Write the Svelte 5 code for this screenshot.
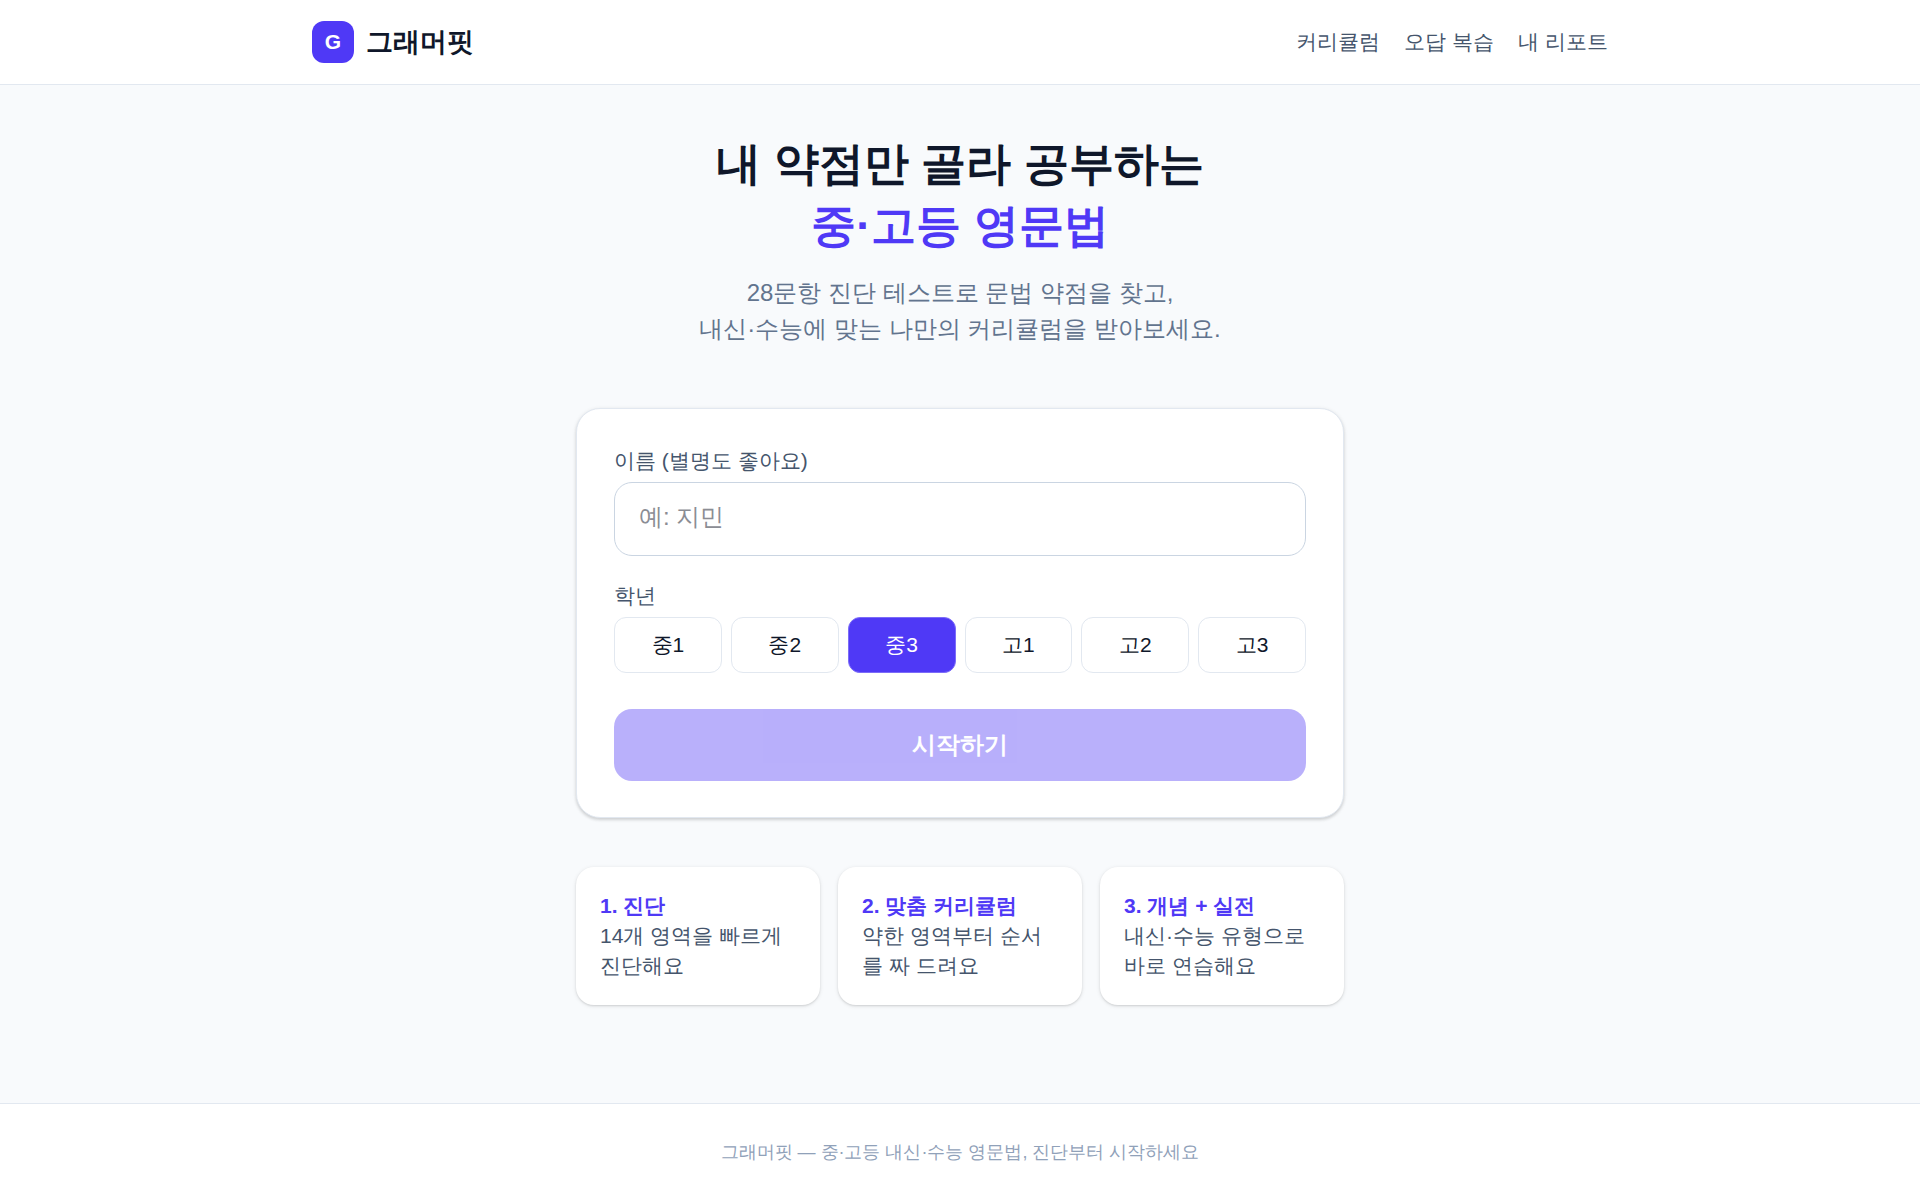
<script lang="ts">
	const links = [
		{ href: '#curriculum', label: '커리큘럼' },
		{ href: '#review', label: '오답 복습' },
		{ href: '#report', label: '내 리포트' }
	];

	const grades = ['중1', '중2', '중3', '고1', '고2', '고3'];

	const steps = [
		{ title: '1. 진단', text: '14개 영역을 빠르게 진단해요' },
		{ title: '2. 맞춤 커리큘럼', text: '약한 영역부터 순서를 짜 드려요' },
		{ title: '3. 개념 + 실전', text: '내신·수능 유형으로 바로 연습해요' }
	];

	let name = $state('');
	let grade = $state('중3');
</script>

<div class="page">
	<header>
		<div class="header-inner">
			<a class="brand" href="#home">
				<span class="logo">G</span>
				<span>그래머핏</span>
			</a>
			<nav>
				{#each links as link}
					<a href={link.href}>{link.label}</a>
				{/each}
			</nav>
		</div>
	</header>

	<main>
		<section class="hero">
			<h1>내 약점만 골라 공부하는<br /><span class="accent">중·고등 영문법</span></h1>
			<p>28문항 진단 테스트로 문법 약점을 찾고,<br />내신·수능에 맞는 나만의 커리큘럼을 받아보세요.</p>
		</section>

		<form class="card" onsubmit={(e) => e.preventDefault()}>
			<label for="name">이름 (별명도 좋아요)</label>
			<input id="name" type="text" placeholder="예: 지민" bind:value={name} />

			<div class="label" id="grade-label">학년</div>
			<div class="grades" role="group" aria-labelledby="grade-label">
				{#each grades as g}
					<button
						type="button"
						class="grade"
						class:selected={grade === g}
						aria-pressed={grade === g}
						onclick={() => (grade = g)}>{g}</button
					>
				{/each}
			</div>

			<button class="submit" type="submit" disabled={!name.trim()}>시작하기</button>
		</form>

		<section class="steps">
			{#each steps as step}
				<div class="step">
					<h2>{step.title}</h2>
					<p>{step.text}</p>
				</div>
			{/each}
		</section>
	</main>

	<footer>그래머핏 — 중·고등 내신·수능 영문법, 진단부터 시작하세요</footer>
</div>

<style>
	:global(body) {
		margin: 0;
		background: #f8fafc;
	}
	.page,
	.page * {
		box-sizing: border-box;
	}
	.page {
		display: flex;
		flex-direction: column;
		min-height: 100vh;
		color: #0f172a;
		font-family: 'Liberation Sans', sans-serif;
		font-size: 24px;
		line-height: 36px;
	}
	h1,
	h2,
	p {
		margin: 0;
	}
	a {
		color: inherit;
		text-decoration: none;
	}
	input,
	button {
		font: inherit;
	}
	header {
		border-bottom: 1px solid #e2e8f0;
		background: #fff;
	}
	.header-inner {
		display: flex;
		align-items: center;
		justify-content: space-between;
		max-width: 1344px;
		margin: 0 auto;
		padding: 21px 24px;
	}
	.brand {
		display: flex;
		align-items: center;
		gap: 12px;
		font-size: 27px;
		font-weight: 700;
		line-height: 42px;
	}
	.logo {
		display: grid;
		place-items: center;
		width: 42px;
		height: 42px;
		border-radius: 12px;
		background: #4f39f6;
		color: #fff;
		font-size: 21px;
	}
	nav {
		display: flex;
		gap: 24px;
		color: #45556c;
		font-size: 21px;
	}
	main {
		flex: 1;
		width: 100%;
		max-width: 816px;
		margin: 0 auto;
		padding: 48px 24px 96px;
	}
	.hero {
		margin-bottom: 61px;
		text-align: center;
	}
	.hero h1 {
		margin-bottom: 18px;
		font-size: 45px;
		font-weight: 700;
		line-height: 62px;
	}
	.accent {
		color: #4f39f6;
	}
	.hero p {
		color: #62748e;
	}
	.card {
		padding: 36px 37px;
		border: 1px solid #e2e8f0;
		border-radius: 24px;
		background: #fff;
		box-shadow: 0 1px 4px rgba(0, 0, 0, 0.1), 0 2px 3px rgba(0, 0, 0, 0.1);
	}
	label,
	.label {
		display: block;
		margin-bottom: 6px;
		color: #45556c;
		font-size: 21px;
		line-height: 31px;
	}
	input {
		display: block;
		width: 100%;
		height: 74px;
		margin-bottom: 24px;
		padding: 16px 24px 20px;
		border: 1px solid #cad5e2;
		border-radius: 18px;
		outline: none;
		background: #fff;
		color: inherit;
	}
	input::placeholder {
		color: #8b8d94;
	}
	input:focus {
		border-color: #4f39f6;
	}
	.grades {
		display: grid;
		grid-template-columns: repeat(6, 1fr);
		gap: 9px;
		margin-bottom: 36px;
	}
	.grade {
		height: 56px;
		padding: 0;
		border: 1px solid #e2e8f0;
		border-radius: 12px;
		background: #fff;
		color: inherit;
		font-size: 21px;
		cursor: pointer;
	}
	.grade.selected {
		border-color: #7c6cf8;
		background: #4f39f6;
		color: #fff;
	}
	.submit {
		display: block;
		width: 100%;
		padding: 18px;
		border: 0;
		border-radius: 18px;
		background: #4f39f6;
		color: #fff;
		font-weight: 700;
		cursor: pointer;
	}
	.submit:disabled {
		opacity: 0.4;
		cursor: default;
	}
	.steps {
		display: grid;
		grid-template-columns: repeat(3, 1fr);
		gap: 18px;
		margin-top: 49px;
	}
	.step {
		padding: 24px;
		border-radius: 18px;
		background: #fff;
		box-shadow: 0 1px 4px rgba(0, 0, 0, 0.1), 0 1px 2px rgba(0, 0, 0, 0.1);
		color: #45556c;
		font-size: 21px;
		line-height: 30px;
	}
	.step h2 {
		color: #4f39f6;
		font-size: inherit;
		font-weight: 700;
	}
	footer {
		padding: 36px 24px;
		border-top: 1px solid #e2e8f0;
		background: #fff;
		color: #90a1b9;
		font-size: 18px;
		line-height: 24px;
		text-align: center;
	}
</style>
